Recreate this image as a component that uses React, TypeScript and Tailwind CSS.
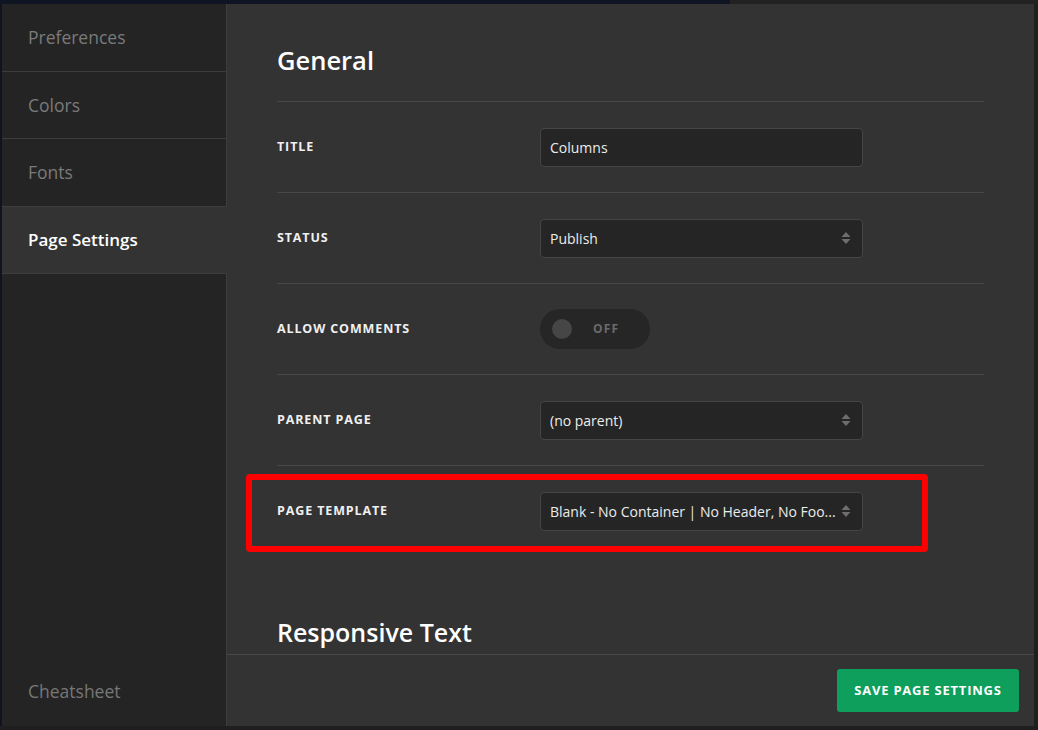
import React from "react";

const font = { fontFamily: '"Open Sans", "Noto Sans", sans-serif' };

function Arrows() {
  return (
    <svg width="10" height="14" viewBox="0 0 10 14" className="shrink-0">
      <path d="M5 1 L9.5 6 L0.5 6 Z" fill="#6e6e6e" />
      <path d="M5 13 L9.5 8 L0.5 8 Z" fill="#6e6e6e" />
    </svg>
  );
}

function Field({ children }: { children: React.ReactNode }) {
  return (
    <div className="flex h-[39px] w-[323px] items-center rounded-[4px] border border-[#454545] bg-[#252525] pl-[9px] pr-[11px] text-[14px] text-[#ececec]">
      {children}
    </div>
  );
}

function Row({ label, children, extra }: { label: string; children: React.ReactNode; extra?: React.ReactNode }) {
  return (
    <div className="relative flex h-[91px] items-center border-t border-[#474747]">
      <div className="w-[263px] text-[12.5px] font-bold tracking-[0.07em] text-[#f0f0f0]">{label}</div>
      {children}
      {extra}
    </div>
  );
}

export default function App() {
  const side = [
    { t: "Preferences" },
    { t: "Colors" },
    { t: "Fonts" },
    { t: "Page Settings", active: true },
  ];
  return (
    <div className="flex h-[730px] w-[1038px] flex-col bg-[#1f1f1f]" style={font}>
      <div className="flex h-[4px] shrink-0">
        <div className="w-[730px] bg-[#0f1522]" />
        <div className="flex-1 bg-[#222222]" />
      </div>
      <div className="flex min-h-0 flex-1 pb-[4px] pr-[4px]">
        <div className="w-[2px] bg-[#0f1420]" />
        <div className="flex w-[225px] flex-col bg-[#242424]">
          {side.map((s) => (
            <div
              key={s.t}
              className={`flex h-[67.5px] shrink-0 items-center border-b border-[#3d3d3d] pl-[26px] ${
                s.active ? "bg-[#333333] text-[17px] font-semibold text-white" : "border-r text-[17.5px] text-[#7a7a7a]"
              }`}
            >
              {s.t}
            </div>
          ))}
          <div className="flex flex-1 items-end border-r border-[#3d3d3d] pb-[22px] pl-[26px] text-[17.5px] text-[#777777]">
            Cheatsheet
          </div>
        </div>
        <div className="flex min-w-0 flex-1 flex-col bg-[#333333]">
          <div className="min-h-0 flex-1 overflow-hidden px-[50px]">
            <div className="pb-[24px] pt-[40px] text-[25.5px] font-semibold leading-[33px] text-white">General</div>
            <Row label="TITLE">
              <Field>Columns</Field>
            </Row>
            <Row label="STATUS">
              <Field>
                <span className="flex-1">Publish</span>
                <Arrows />
              </Field>
            </Row>
            <Row label="ALLOW COMMENTS">
              <div className="flex h-[40px] w-[110px] items-center rounded-full bg-[#262626] pl-[12px]">
                <div className="h-[20px] w-[20px] rounded-full bg-[#464646]" />
                <span className="ml-[21px] text-[12px] font-bold tracking-[0.1em] text-[#6a6a6a]">OFF</span>
              </div>
            </Row>
            <Row label="PARENT PAGE">
              <Field>
                <span className="flex-1">(no parent)</span>
                <Arrows />
              </Field>
            </Row>
            <Row
              label="PAGE TEMPLATE"
              extra={
                <div className="absolute left-[-31px] top-[8px] h-[78px] w-[682px] rounded-[4px] border-[6px] border-[#ff0000]" />
              }
            >
              <Field>
                <span className="flex-1 whitespace-nowrap">Blank - No Container | No Header, No Foo...</span>
                <Arrows />
              </Field>
            </Row>
            <div className="pt-[60px] text-[25px] font-semibold leading-[32px] text-white">Responsive Text</div>
          </div>
          <div className="flex h-[72px] shrink-0 items-center justify-end border-t border-[#474747] pr-[15px]">
            <button className="h-[43px] w-[182px] rounded-[3px] bg-[#0d9f5b] text-[13px] font-bold tracking-[0.06em] text-white">
              SAVE PAGE SETTINGS
            </button>
          </div>
        </div>
      </div>
    </div>
  );
}
